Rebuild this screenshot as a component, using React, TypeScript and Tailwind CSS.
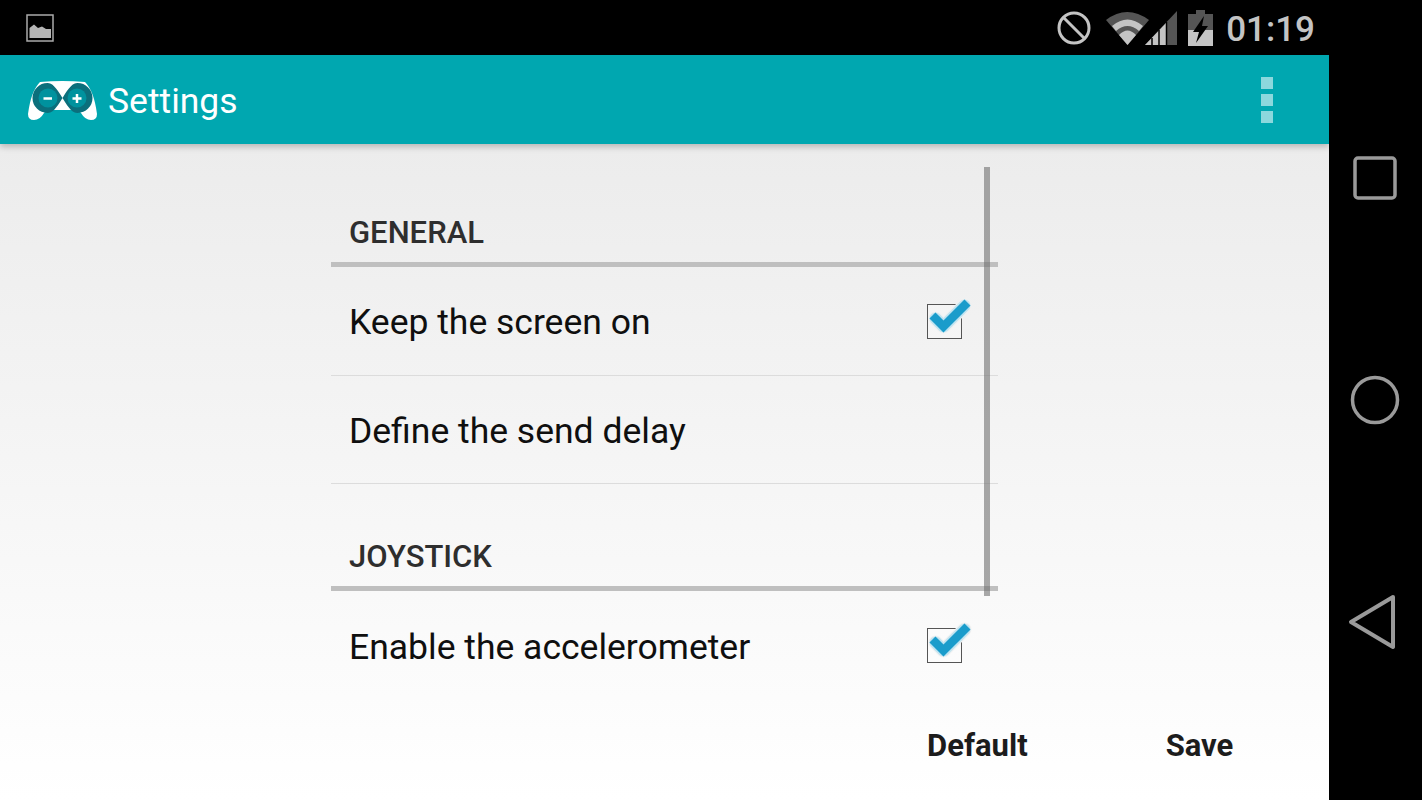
import React from "react";

const CheckBox = () => {
  return (
    <div className="relative w-[35px] h-[35px] border-[1.5px] border-[#555] bg-white/30">
      <svg
        className="absolute left-[-4px] top-[-8px] overflow-visible"
        width="46"
        height="40"
        viewBox="0 0 46 40"
      >
        <path d="M11.5 21.5 L19.5 29.5 L40.5 8.5" fill="none" stroke="#f1f1f1" strokeWidth="14" strokeLinecap="round" strokeLinejoin="round" />
        <path d="M11.5 21.5 L19.5 29.5 L40.5 8.5" fill="none" stroke="#8fd8f2" strokeWidth="12" strokeLinecap="round" strokeLinejoin="round" opacity="0.5" />
        <path d="M11.5 21.5 L19.5 29.5 L40.5 8.5" fill="none" stroke="#1a9ccb" strokeWidth="8.5" strokeLinecap="square" strokeLinejoin="miter" />
      </svg>
    </div>
  );
};

const SectionHeader = ({ label, top }: { label: string; top: string }) => {
  return (
    <div className={`${top} flex flex-col`}>
      <p className="pl-[18px] h-[30px] leading-[32px] text-[31px] font-medium text-[#2e2e2e]">{label}</p>
      <div className="mt-[15px] h-[5px] bg-[#bfbfbf]"></div>
    </div>
  );
};

const Row = ({ label, height, checked, line }: { label: string; height: string; checked?: boolean; line?: boolean }) => {
  return (
    <div className={`${height} flex items-center justify-between pl-[18px] pr-[36px] ${line ? "border-b border-[#dcdcdc]" : ""}`}>
      <p className="pt-[4px] text-[35.5px] text-[#0f0f0f]">{label}</p>
      {checked && <CheckBox />}
    </div>
  );
};

const App = () => {
  return (
    <main className="w-[1422px] h-[800px] flex bg-black overflow-hidden font-['Roboto',sans-serif]">
      <div className="w-[1329px] flex flex-col">
        {/* status bar */}
        <div className="h-[55px] bg-black flex items-center pl-[26px] pr-[14px] justify-between">
          <svg width="28" height="28" viewBox="0 0 28 28">
            <rect x="1" y="1" width="26" height="26" fill="none" stroke="#aaa" strokeWidth="1.5" />
            <path d="M3.5 24 V14 L8 10.5 L12 14 L16 12.5 L20 15 L25 15 V24 Z" fill="#b5b5b5" />
          </svg>
          <div className="flex items-center">
            <svg width="34" height="34" viewBox="0 0 34 34">
              <circle cx="17" cy="17" r="15" fill="none" stroke="#c4c4c4" strokeWidth="3" />
              <path d="M7 7 L27 27" stroke="#c4c4c4" strokeWidth="3" />
            </svg>
            <svg className="ml-[15px]" width="43" height="36" viewBox="0 0 43 36">
              <path d="M0 10 Q21 -6 43 10 L21.5 35 Z" fill="#555" />
              <path d="M6 16 Q21.5 3 37 16 L33 21 Q21.5 11 10 21 Z" fill="#c4c4c4" />
              <path d="M13 25 Q21.5 16 30 25 L21.5 35 Z" fill="#c4c4c4" />
            </svg>
            <svg className="ml-[-4px]" width="33" height="36" viewBox="0 0 33 36">
              <path d="M0 35 L32 1 V35 Z" fill="#555" />
              <path d="M0 35 L22 12 V35 Z" fill="#c4c4c4" />
              <path d="M7 28 V35 M14 20 V35 M21.5 12 V35" stroke="#000" strokeWidth="1.5" />
            </svg>
            <svg className="ml-[10px]" width="25" height="36" viewBox="0 0 25 36">
              <path d="M8 0 H17 V4 H25 V36 H0 V4 H8 Z" fill="#555" />
              <path d="M0 20 H25 V36 H0 Z" fill="#c4c4c4" />
              <path d="M16 6 L5 22 H11 L8 33 L20 16 H14 Z" fill="#000" />
            </svg>
            <span className="ml-[13px] pt-[4px] text-[35px] leading-none font-medium text-[#c4c4c4]">01:19</span>
          </div>
        </div>
        {/* app bar */}
        <div className="relative z-10 h-[89px] bg-[#00a7b0] flex items-center justify-between pl-[28px] pr-[56px] shadow-[0_3px_6px_rgba(0,0,0,0.22)]">
          <div className="flex items-center">
            <svg className="mt-[2px]" width="69" height="40" viewBox="0 0 69 40">
              <path d="M12 1 Q34 -1 57 1 Q66 10 69 33 Q69 39 63 39 Q57 39 53 32 Q51 29 47 29 H22 Q18 29 16 32 Q12 39 6 39 Q0 39 0 33 Q3 10 12 1 Z" fill="#fff" />
              <path d="M34.5 17 C28 6 24 2 19.5 2 A 15 15 0 0 0 19.5 32 C24 32 28 28 34.5 17 C41 6 45 2 49.5 2 A 15 15 0 0 1 49.5 32 C45 32 41 28 34.5 17 Z" fill="#0b6f7c" />
              <circle cx="20" cy="17" r="9.5" fill="#00929e" />
              <circle cx="49" cy="17" r="9.5" fill="#00929e" />
              <path d="M15.5 17.5 H24 M44.5 17.5 H53.5 M49 13 V22" stroke="#fff" strokeWidth="2.5" />
            </svg>
            <span className="ml-[11px] pt-[5px] text-[35.5px] text-white">Settings</span>
          </div>
          <div className="flex flex-col gap-[5px]">
            <div className="w-[12px] h-[12px] bg-[#8cd8dd]"></div>
            <div className="w-[12px] h-[12px] bg-[#8cd8dd]"></div>
            <div className="w-[12px] h-[12px] bg-[#8cd8dd]"></div>
          </div>
        </div>
        {/* content */}
        <div className="flex-1 flex flex-col bg-gradient-to-b from-[#ececec] to-[#ffffff]">
          <div className="relative ml-[331px] w-[667px] h-[560px] pt-[73px]">
            <SectionHeader label="GENERAL" top="" />
            <Row label="Keep the screen on" height="h-[109px]" checked line />
            <Row label="Define the send delay" height="h-[108px]" line />
            <SectionHeader label="JOYSTICK" top="pt-[57px]" />
            <Row label="Enable the accelerometer" height="h-[109px]" checked />
            <div className="absolute left-[653px] top-[23px] w-[6px] h-[429px] bg-[#707070]/60"></div>
          </div>
          <div className="h-[84px] flex items-center pl-[927px] text-[#1c1c1c] text-[31px] font-bold">
            <span>Default</span>
            <span className="ml-[138px]">Save</span>
          </div>
        </div>
      </div>
      {/* nav bar */}
      <div className="w-[93px] flex flex-col items-center pr-[1px] pt-[156px]">
        <svg width="44" height="44" viewBox="0 0 44 44">
          <rect x="2" y="2" width="40" height="40" rx="3" fill="none" stroke="#9a9a9a" strokeWidth="3.5" />
        </svg>
        <svg className="mt-[175px]" width="50" height="50" viewBox="0 0 50 50">
          <circle cx="25" cy="25" r="22.5" fill="none" stroke="#9a9a9a" strokeWidth="3.5" />
        </svg>
        <svg className="mt-[169px] mr-[7px]" width="48" height="56" viewBox="0 0 48 56">
          <path d="M45 3 L3 28 L45 53 Z" fill="none" stroke="#9a9a9a" strokeWidth="4" strokeLinejoin="round" />
        </svg>
      </div>
    </main>
  );
};

export default App;
